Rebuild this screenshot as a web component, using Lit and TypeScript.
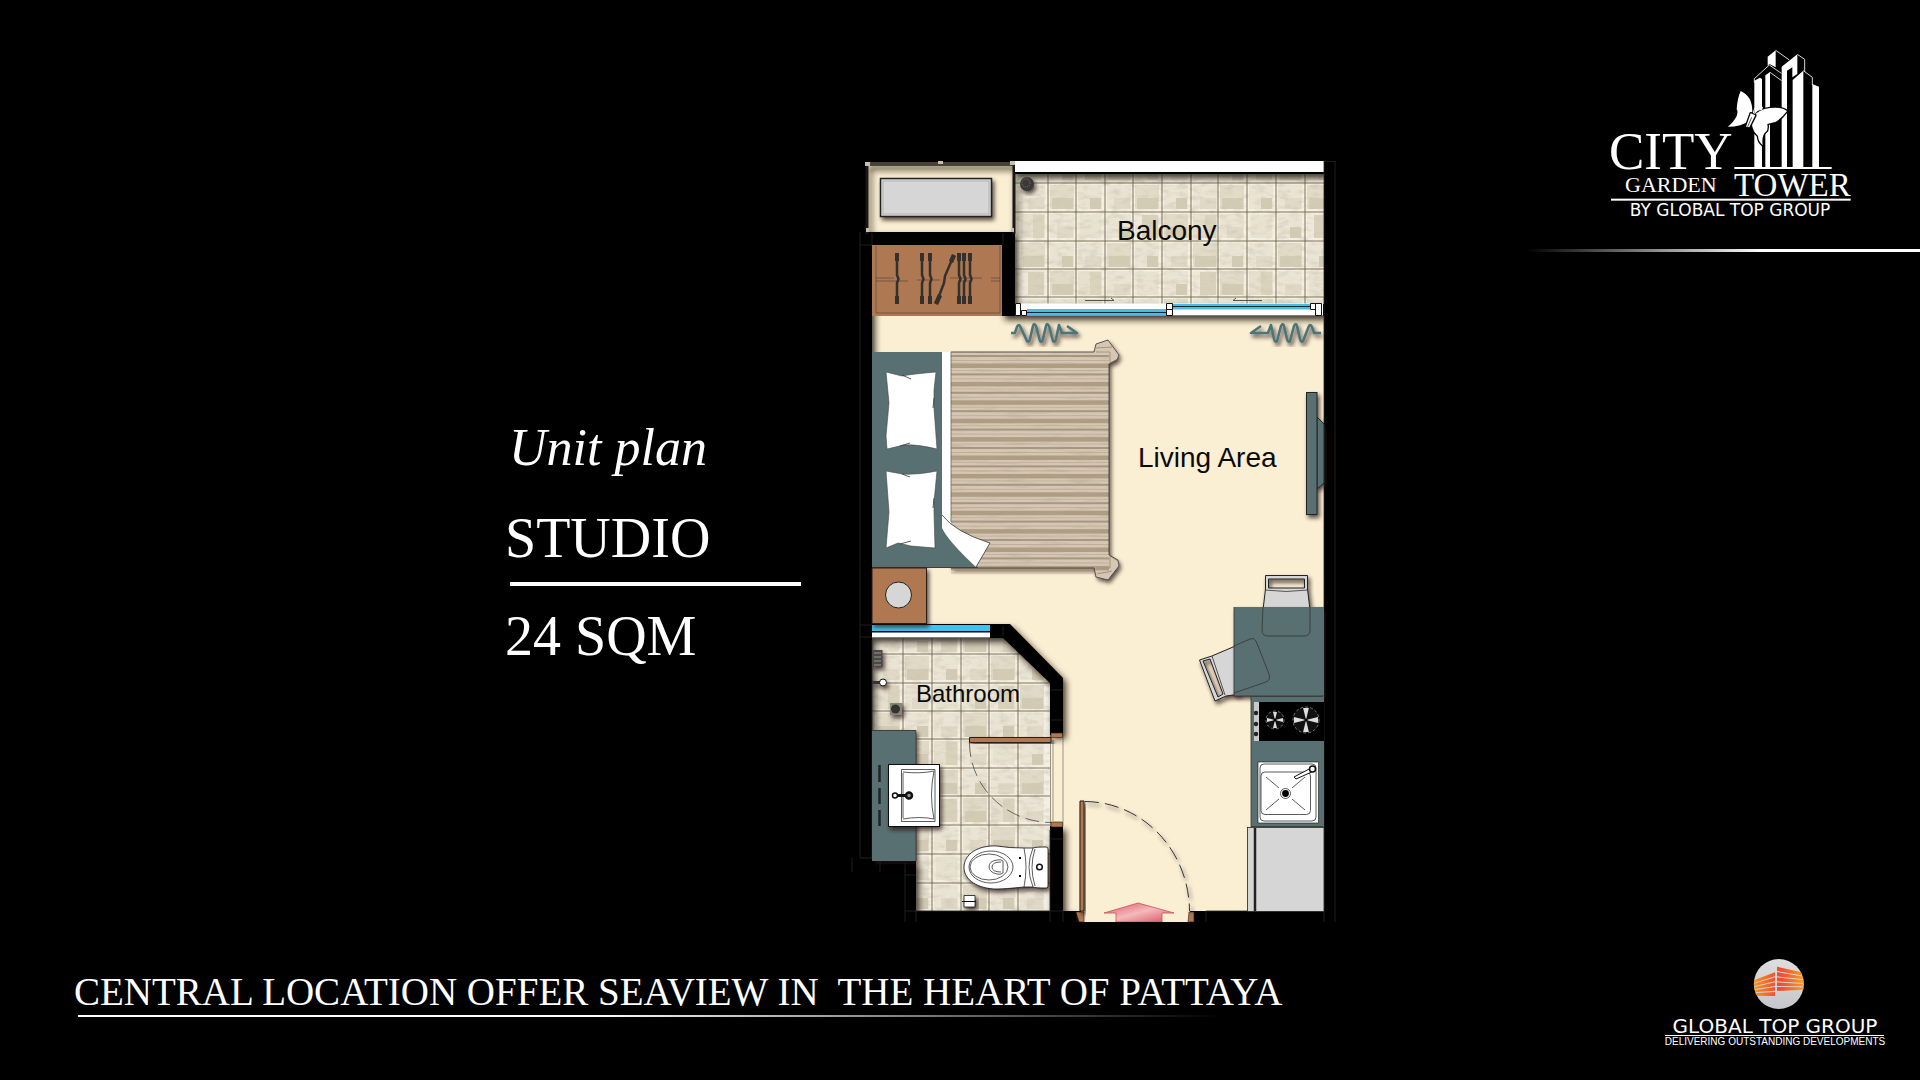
import { LitElement, html, svg, css } from "lit";
import { customElement } from "lit/decorators.js";

const range = (n: number) => Array.from({ length: n }, (_, i) => i);

/** Shared styles for the drawings. */
const drawing = css`
  :host {
    display: block;
  }
  svg {
    display: block;
    width: 100%;
    height: auto;
  }
  .serif {
    font-family: "Liberation Serif", "Times New Roman", serif;
  }
  .sans {
    font-family: "Liberation Sans", Arial, sans-serif;
  }
  .wide {
    font-family: "DejaVu Sans", Verdana, sans-serif;
  }
`;

@customElement("floor-plan")
export class FloorPlan extends LitElement {
  static styles = [
    drawing,
    css`
      .label {
        font-size: 28px;
        fill: #0a0a0a;
      }
      .label-small {
        font-size: 24px;
      }
      .cream {
        fill: #faeed3;
      }
      .teal {
        fill: #587071;
      }
      .wood {
        fill: #af7851;
        stroke: #2b1d12;
      }
      .grey {
        fill: #d6d6d6;
        stroke: #222;
      }
      .white {
        fill: #fff;
        stroke: #111;
      }
      .thin {
        fill: none;
        stroke: #333;
        stroke-width: 0.8;
      }
      .grout {
        fill: none;
        stroke: #6a5f45;
        stroke-width: 1;
        opacity: 0.85;
      }
      .seam {
        fill: none;
        stroke: #262626;
        stroke-width: 0.8;
      }
      .swing {
        fill: none;
        stroke: #333;
        stroke-dasharray: 14 6;
      }
      .glass {
        fill: #4bbde4;
      }
      .curtain {
        fill: none;
        stroke: #4c7479;
        stroke-width: 2.6;
        stroke-linejoin: round;
      }
    `,
  ];

  private tiles(xs: number[], ys: number[], x0: number, x1: number, y0: number, y1: number) {
    return svg`
      <path class="grout" d=${xs.map((x) => `M${x} ${y0}V${y1}`).join("") + ys.map((y) => `M${x0} ${y}H${x1}`).join("")}></path>`;
  }

  private patches(xs: number[], ys: number[]) {
    return ys.map((y, r) =>
      xs.map((x, c) => {
        const k = (r * 7 + c * 5 + r * c * 3) % 6;
        return svg`
          <rect x=${x + 2} y=${y + 2} width="24" height="24" fill="#bdb294" opacity=${0.1 + (k % 4) * 0.08}></rect>
          <rect x=${x + 4 + (k % 3) * 5} y=${y + 3 + (k % 2) * 12} width=${21 - (k % 3) * 5} height=${23 - (k % 2) * 12}
            fill="#b0a484" opacity=${0.1 + k * 0.06}></rect>`;
      })
    );
  }

  private blanket() {
    return range(12).map((i) => {
      const y = 365.5 + i * 18.4;
      return svg`
        <rect x="951" y=${y - 2} width="158" height="4.5" fill="#a8957a" opacity=".85"></rect>
        <rect x="951" y=${y - 5.5} width="158" height="1" fill="#c0af98"></rect>
        <rect x="951" y=${y - 10.5} width="158" height="2" fill="#9a8a70" opacity=".8"></rect>
        <rect x="951" y=${y + 4.5} width="158" height="1" fill="#c4b49e"></rect>`;
    });
  }

  private hanger(x: number) {
    return svg`
      <path d="M${x} 253V275L${x + 1.5} 279L${x} 283V304" fill="none" stroke="#33302e" stroke-width="2.5"></path>
      <path d="M${x} 253V261M${x} 296V304" stroke="#33302e" stroke-width="4"></path>`;
  }

  private burner(x: number, y: number, r: number) {
    return svg`
      <g transform="translate(${x} ${y})">
        <circle r=${r} fill="#111" stroke="#777" stroke-dasharray="3 2"></circle>
        ${[0, 90, 180, 270].map(
          (a) => svg`<path transform="rotate(${a})" d="M0 0L${-r / 4.5} ${-r + 1}H${r / 4.5}Z" fill="#ddd"></path>`
        )}
        <circle r="1.5" fill="#000"></circle>
      </g>`;
  }

  render() {
    const bx = [1048, 1076, 1105, 1133, 1162, 1191, 1218, 1247, 1276, 1305];
    const by = [183, 212, 241, 269, 297];
    const tx = [903, 932, 961, 989, 1018];
    const ty = [654, 683, 711, 739, 768, 796, 825, 854, 883];
    return html`
      <svg viewBox="850 160 490 762" role="img" aria-label="Studio floor plan">
        <defs>
          <filter id="shade" x="-20%" y="-20%" width="150%" height="150%">
            <feDropShadow dx="2" dy="3" stdDeviation="2" flood-color="#20180c" flood-opacity=".75"></feDropShadow>
          </filter>
          <filter id="wall-shade" filterUnits="userSpaceOnUse" x="850" y="150" width="500" height="790">
            <feDropShadow dx="3" dy="4" stdDeviation="3" flood-color="#20180c" flood-opacity=".85"></feDropShadow>
          </filter>
          <filter id="stone" x="0" y="0" width="100%" height="100%">
            <feTurbulence type="fractalNoise" baseFrequency=".09 .2" numOctaves="4" seed="4"></feTurbulence>
            <feColorMatrix values="0 0 0 0 .6  0 0 0 0 .56  0 0 0 0 .45  0 0 0 1.4 -.62"></feColorMatrix>
            <feComposite operator="in" in2="SourceGraphic"></feComposite>
          </filter>
          <filter id="weave" x="0" y="0" width="100%" height="100%">
            <feTurbulence type="fractalNoise" baseFrequency=".03 .4" numOctaves="3" seed="9"></feTurbulence>
            <feColorMatrix values="0 0 0 0 .45  0 0 0 0 .38  0 0 0 0 .28  0 0 0 1.2 -.6"></feColorMatrix>
            <feComposite operator="in" in2="SourceGraphic"></feComposite>
          </filter>
          <clipPath id="bath">
            <path d="M872 637H1003L1050 682V911H916V860H872Z"></path>
          </clipPath>
          <clipPath id="deck"><path d="M1015 173H1324V304H1015Z"></path></clipPath>
          <linearGradient id="arrow" x1="0" y1="0" x2="1" y2="1">
            <stop offset="0" stop-color="#dc5562"></stop>
            <stop offset=".5" stop-color="#f4b9bb"></stop>
            <stop offset="1" stop-color="#d8505e"></stop>
          </linearGradient>
        </defs>

        <!-- floors -->
        <path class="cream" d="M867 163H1014V234H867Z M872 316H1324V911H1190V922H1081V911H1050V680L1000 630L872 630Z"></path>
        <g clip-path="url(#deck)">
          <rect x="1015" y="173" width="309" height="131" fill="#f5f0e2"></rect>
          ${this.patches([1019, ...bx], [154, ...by])}
          <rect x="1015" y="173" width="309" height="131" fill="#f3ecd9" filter="url(#stone)"></rect>
          ${this.tiles(bx, by, 1015, 1324, 173, 304)}
        </g>
        <g clip-path="url(#bath)">
          <rect x="872" y="637" width="178" height="274" fill="#f4efe2"></rect>
          ${this.patches([874, ...tx], [626, ...ty])}
          <rect x="872" y="637" width="178" height="274" fill="#f0e9d6" filter="url(#stone)"></rect>
          ${this.tiles(tx, ty, 872, 1050, 637, 911)}
        </g>

        <!-- walls -->
        <g filter="url(#wall-shade)">
          <path d="M850 232H1015V316H1002V245H872V860H850Z"></path>
          <path d="M867 162H1015V166H867Z" fill="#4a4138"></path>
          <path d="M867 163V234M1014 163V234" stroke="#1b1917" stroke-width="3"></path>
          <rect x="1015" y="161" width="309" height="13"></rect>
          <path d="M990 624H1010L1063 678V735H1050V683L1003 638H990Z"></path>
          <path d="M1050 826H1063V911H1076V922H850V860H916V911H1050Z"></path>
          <rect x="1015" y="304" width="309" height="12"></rect>
          <rect x="872" y="624" width="118" height="14"></rect>
        </g>
        <path d="M1324 160H1340V922H1324ZM1194 911H1324V922H1194ZM850 861H915V922H850Z"></path>
        <path d="M865 162h5v4h-5zM938 161h5v3h-5zM1010 161h5v4h-5zM866 228h3v4h-3zM1011 228h3v4h-3z" fill="#c9bdac"></path>
        <rect x="1015" y="161" width="309" height="11" fill="#fff"></rect>
        <path class="seam" d="M860 232V858M872 640V858M872 233V245M860 245H872M1003 233V245M1324 161V922M1335 161V922M1324 161.500H1336M860 625H872M860 637H872M1003 626V636M1051 690H1063M1051 720H1063M1051 839H1063M852 858V872M860 858H880V872M905 863V922M916 911V922M905 875H916M905 911H1063M1050 830V922M1063 911V922M1206 911V922M1206 911H1324"></path>

        <!-- air conditioner ledge and balcony drain -->
        <rect class="grey" x="880.500" y="178.500" width="111" height="38" stroke-width="1.500" filter="url(#shade)"></rect>
        <rect class="thin" x="883" y="181" width="106" height="33" opacity=".25"></rect>
        <circle cx="1027" cy="184" r="7" fill="#3b3934" filter="url(#shade)"></circle>
        <circle cx="1026" cy="183" r="4" fill="none" stroke="#77736a" stroke-dasharray="1 1"></circle>

        <!-- wardrobe -->
        <rect x="872" y="245" width="130" height="71" fill="#ad7852"></rect>
        <path class="thin" stroke-opacity=".6" d="M876 246V313H1000V246M876 278H894M876 281H908M917 280H940M950 278H982M958 281H970M991 278H1000M991 281H1000"></path>
        ${[897, 922, 930, 959, 964, 970].map((x) => this.hanger(x))}
        <path d="M954 255L945 276L944 283L936 304" fill="none" stroke="#33302e" stroke-width="2.500"></path>
        <path d="M954 255L951 262M940 295L936 304" stroke="#33302e" stroke-width="4.500"></path>

        <!-- sliding windows -->
        <rect x="1015" y="303.500" width="308" height="12" fill="#fff"></rect>
        <rect class="glass" x="1027" y="309" width="139" height="6.500"></rect>
        <rect class="glass" x="1173" y="304" width="137" height="5.500"></rect>
        <path d="M1027 312.500H1166M1173 306.500H1310" stroke="#0b2a36" stroke-width="1.200"></path>
        <path class="white" d="M1015.500 303.500h5v12h-5zM1021.500 310.500h5v5h-5zM1166.500 303.500h6v6h-6zM1166.500 309.500h6v6h-6zM1310.500 303.500h5v6h-5zM1315.500 303.500h6v12h-6z"></path>
        <path class="thin" d="M1085 300.500H1114L1111 298M1262 300.500H1233L1236 298"></path>
        <rect x="872" y="625" width="118" height="6" fill="#3fc3f0"></rect>
        <rect x="872" y="632.500" width="118" height="5" fill="#fff"></rect>

        <!-- curtains -->
        <g filter="url(#shade)">
          <path class="curtain" d="M1011 333H1015Q1018 322 1020 326L1027 341Q1029 343 1030 339L1033 326Q1034 322 1036 326L1040 341Q1042 343 1043 339L1046 326Q1047 322 1049 326L1053 341Q1055 343 1056 339L1059 325L1062 333H1077L1067 326"></path>
          <path class="curtain" d="M1321 333H1314Q1311 322 1309 326L1303 341Q1301 343 1300 339L1297 326Q1296 322 1294 326L1290 341Q1288 343 1287 339L1284 326Q1283 322 1281 326L1277 341Q1275 343 1274 339L1271 325L1268 333H1251L1261 326"></path>
        </g>

        <!-- bed -->
        <g filter="url(#shade)">
          <path d="M951 352H1094L1096 344L1108 340L1119 355L1117 360L1109 364V555L1118 560L1119 566L1108 580L1096 577L1094 568H951Z" fill="#d6c7b5"></path>
        </g>
        ${this.blanket()}
        <rect x="951" y="352" width="158" height="216" filter="url(#weave)"></rect>
        <path d="M1096 352H1110V363L1118 359M1096 348L1112 347M1096 568H1110V556L1118 561M1097 574L1112 571" fill="none" stroke="#a8957a"></path>
        <path class="thin" d="M951 352H1094L1096 344L1108 340L1119 355L1117 360L1109 364V555L1118 560L1119 566L1108 580L1096 577L1094 568H951"></path>
        <rect class="teal" x="872" y="352" width="70" height="216"></rect>
        <path class="teal" d="M942 520L978 568H942Z"></path>
        <path class="thin" d="M872 567.500H978"></path>
        <rect x="942" y="352" width="9" height="173" fill="#fff"></rect>
        <path d="M951 352V522" stroke="#6b6252" stroke-width=".8"></path>
        <path d="M942 515Q955 532 990 543L976 567Q948 541 942 528Z" fill="#fff"></path>
        <path class="thin" d="M942 515Q955 532 990 543L976 567"></path>
        <path d="M886 372L902 376Q912 374 936 372L934 390V408L937 449Q916 444 904 445L887 449L886 436L889 403Z" fill="#fff" stroke="#444" stroke-width=".6"></path>
        <path d="M886 471L902 474Q916 475 937 471L934 502V512L935 548L911 546L898 543L886 548L889 512Z" fill="#fff" stroke="#444" stroke-width=".6"></path>
        <path class="thin" d="M902 375L911 379M900 446L910 443M902 474L910 477M900 544L911 541M934 398L933 408M934 498L933 508"></path>

        <!-- nightstand -->
        <rect class="wood" x="872" y="568" width="54.500" height="55.500" filter="url(#shade)"></rect>
        <circle class="grey" cx="898.500" cy="595" r="13"></circle>

        <!-- television -->
        <g filter="url(#shade)">
          <path class="teal" d="M1317 417L1324 424V483L1317 489Z" stroke="#222"></path>
          <rect class="teal" x="1306.500" y="392.500" width="10.500" height="122" stroke="#222"></rect>
        </g>

        <!-- dining table and chairs -->
        <g filter="url(#shade)">
          <path class="grey" fill-rule="evenodd" d="M1265.500 575.500H1307.500V589L1310 610H1263L1265.500 589ZM1268.500 579V588H1304.500V579Z"></path>
          <path class="grey" fill-rule="evenodd" d="M1199.500 660L1212 656L1240 644V694L1226 696L1215 701ZM1203 661L1218 697L1223 694L1210 659Z"></path>
        </g>
        <path d="M1234 607H1324V696H1250L1234 696Z" class="teal" filter="url(#shade)"></path>
        <path class="thin" d="M1265 590Q1286 593 1308 590M1263 607L1262 630Q1262 636 1268 636H1304Q1310 636 1310 630V607M1212 656L1225 695M1234 646L1250 639Q1254 637 1256 641L1269 674Q1271 680 1266 682L1234 693M1234 607V696H1324"></path>

        <!-- kitchen -->
        <rect class="teal" x="1251" y="696" width="73" height="131"></rect>
        <path class="thin" d="M1251 696V827M1251 696.500H1323M1251 826.500H1323"></path>
        <rect x="1259" y="702" width="65" height="39"></rect>
        <rect x="1254" y="702" width="5" height="39" fill="#c9c9c9"></rect>
        ${[713, 724, 734].map((y) => svg`<circle cx="1256" cy=${y} r="2.200" fill="#222"></circle>`)}
        ${this.burner(1275, 720, 9)} ${this.burner(1306, 720, 13)}
        <rect class="white" x="1258" y="762" width="60.500" height="61" stroke-width=".6"></rect>
        <rect class="thin" x="1260" y="764" width="56" height="57" rx="4"></rect>
        <rect class="thin" x="1261" y="772" width="49.500" height="42.500" rx="4"></rect>
        <path class="thin" d="M1266 777L1279 788M1305 777L1292 788M1266 810L1279 799M1305 810L1292 799"></path>
        <circle class="thin" cx="1285.500" cy="793.500" r="5"></circle>
        <circle cx="1285.500" cy="793.500" r="3.400"></circle>
        <path class="white" d="M1294 777L1311 768L1314 771L1296 779Z"></path>
        <circle class="white" cx="1312.500" cy="769" r="3" stroke-width="1.500"></circle>
        <rect class="grey" x="1247.500" y="827.500" width="76.500" height="84" stroke-width=".8"></rect>
        <path d="M1255 828V911" stroke="#222" stroke-width="2.500"></path>

        <!-- bathroom -->
        <g fill="#333" filter="url(#shade)">
          <rect x="872" y="650" width="10.500" height="17" fill="#4b4743"></rect>
          <rect x="890" y="703" width="12" height="12" fill="#8a8475"></rect>
          <circle cx="895.500" cy="709" r="4.500"></circle>
          <path d="M872 681H880V684H872Z"></path>
          <circle class="white" cx="883" cy="682.500" r="3.500"></circle>
        </g>
        <path d="M874 653H881M874 657H881M874 661H881M874 665H881" stroke="#999"></path>
        <rect class="teal" x="872" y="730" width="44" height="131" filter="url(#shade)"></rect>
        <path class="thin" d="M872 730.500H916V861"></path>
        <path d="M879.500 765V782M879.500 788V804M879.500 810V826" stroke="#1d2626" stroke-width="2.500"></path>
        <rect class="white" x="888.500" y="764.500" width="51" height="62" filter="url(#shade)"></rect>
        <path class="thin" stroke-width="1.200" d="M901.500 769.500V821.500H935V769.500ZM903 772Q920 774 934 771M903 773V818M934 771Q929 795 934 819Q920 816 903 819"></path>
        <path d="M895 795.500H908" stroke="#111" stroke-width="3"></path>
        <circle class="white" cx="895" cy="795.500" r="2.500" stroke-width="1.500"></circle>
        <circle cx="909" cy="795.500" r="3" fill="#999" stroke="#111" stroke-width="2.500"></circle>

        <path class="white" filter="url(#shade)" stroke-width=".8" d="M1033 848Q1035 847 1046 847Q1048 847 1048 849V886Q1048 888 1046 888Q1035 888 1033 887H1024Q1005 889 997 889C978 889 964 880 964 867.500C964 854 978 845 997 846Q1008 848 1024 848Z"></path>
        <ellipse class="thin" cx="991" cy="867" rx="22" ry="16"></ellipse>
        <ellipse class="thin" cx="989" cy="867" rx="19" ry="13"></ellipse>
        <path class="thin" d="M1003 861V873Q1000 875 997 874Q989 872 989 867Q989 861 997 860Q1001 859 1003 861ZM1001 862Q992 862 992 867Q992 872 1001 872M1024 848Q1028 867 1024 887M1033 848Q1025 867 1033 887M1035 849Q1029 867 1035 886"></path>
        <circle class="white" cx="1039.500" cy="867" r="2.800" stroke-width="1.500"></circle>
        <path d="M1019 857h2v2h-2zM1019 875h2v2h-2z"></path>
        <path class="white" stroke-width=".8" filter="url(#shade)" d="M964 895.500H975V907H964Z"></path>
        <path d="M962 901.500H976" stroke="#111"></path>

        <!-- doors -->
        <path d="M1050.500 735V826M1063 735V826M1053 740V821" class="thin" opacity=".6"></path>
        <path class="wood" stroke-width="1" filter="url(#shade)" d="M969.500 737.500H1051V742.500H969.500Z"></path>
        <path class="wood" stroke-width=".6" d="M1051 733H1062.500V737.500H1051ZM1051 822H1062.500V827H1051ZM1076 912H1084V922H1079ZM1189 912H1194V922H1188Z"></path>
        <path class="swing" opacity=".7" d="M969.500 743A82 80 0 0 0 1051 822.500"></path>
        <path class="wood" filter="url(#shade)" d="M1080 801H1084V911H1080Z"></path>
        <path class="swing" d="M1085 801.500A105 110 0 0 1 1189.500 911" filter="url(#shade)"></path>
        <path fill="url(#arrow)" stroke="#c8505a" stroke-width=".8" d="M1104 913L1138 903L1174 913H1162V922H1116V913Z"></path>

        <text class="sans label" x="1117" y="240">Balcony</text>
        <text class="sans label" x="1138" y="467">Living Area</text>
        <text class="sans label label-small" x="916" y="702">Bathroom</text>
      </svg>
    `;
  }
}

@customElement("tower-logo")
export class TowerLogo extends LitElement {
  static styles = [
    drawing,
    css`
      text {
        fill: #fff;
      }
      .city {
        font-size: 53px;
      }
      .garden {
        font-size: 22px;
      }
      .tower {
        font-size: 33px;
      }
      .by {
        font-size: 17px;
      }
    `,
  ];

  render() {
    return html`
      <svg viewBox="1608 46 246 174" role="img" aria-label="City Garden Tower by Global Top Group">
        <g transform="translate(1520 30) scale(.333333)" fill="#fff">
          <rect x="643" y="411" width="292" height="6"></rect>
          <path d="M703 152L720 143L726 147V411H703ZM736 136L750 126V411H736Z"></path>
          <path d="M743 80L767 61V112L748 102L743 107Z"></path>
          <path d="M785 110L832 73V132L817 142V112L801 122V411H785Z"></path>
          <path d="M818 150L850 122V411H818ZM877 162L897 170V411H877Z"></path>
          <path d="M703 158V146L748 105L784 130M750 127L785 152M767 61L808 90M832 73L854 88V126M850 122L877 142V165" fill="none" stroke="#fff" stroke-width="2.500"></path>
          <g stroke="#000" stroke-width="8" stroke-linejoin="round" paint-order="stroke">
            <path d="M697 262Q715 238 750 234Q785 230 801 243Q785 265 768 275L742 282Q745 300 738 305Q724 315 728 346Q715 335 714 318Q698 305 695 280Z"></path>
            <path d="M662 183Q697 198 697 245L688 272Q665 290 623 290Q640 278 650 258Q655 245 650 238Q652 205 662 183Z"></path>
            <path d="M692 250L706 256L688 292L678 290Z"></path>
          </g>
          <path d="M695 262L683 290" stroke="#000" stroke-width="2"></path>
          <path d="M700 250Q702 232 712 228M703 252Q712 236 727 238" fill="none" stroke="#fff" stroke-width="3"></path>
          <circle cx="708" cy="224" r="3"></circle>
          <circle cx="726" cy="233" r="3"></circle>
          <rect x="273" y="506" width="719" height="6"></rect>
        </g>
        <text class="serif city" x="1609" y="169">CITY</text>
        <text class="serif garden" x="1625" y="192">GARDEN</text>
        <text class="serif tower" x="1734" y="196">TOWER</text>
        <text class="wide by" x="1730" y="216" text-anchor="middle">BY GLOBAL TOP GROUP</text>
      </svg>
    `;
  }
}

@customElement("group-logo")
export class GroupLogo extends LitElement {
  static styles = [
    drawing,
    css`
      text {
        fill: #fff;
        text-anchor: middle;
      }
      .name {
        font-size: 20px;
      }
      .motto {
        font-size: 10px;
      }
    `,
  ];

  render() {
    const left = [
      [121, 129, 97, 109],
      [131, 139, 112, 124],
      [142, 148, 127, 138],
      [151, 157, 141, 152],
      [160, 167, 156, 168],
    ];
    const right = [
      [80, 93, 98, 107],
      [96, 109, 110, 118],
      [112, 124, 121, 129],
      [127, 138, 132, 139],
      [141, 153, 142, 149],
    ];
    return html`
      <svg viewBox="1664 956 222 92" role="img" aria-label="Global Top Group">
        <defs>
          <linearGradient id="ball" x1="0" y1="0" x2="0" y2="1">
            <stop offset="0" stop-color="#dedee0"></stop>
            <stop offset="1" stop-color="#c6c7cb"></stop>
          </linearGradient>
          <linearGradient id="flame" gradientUnits="userSpaceOnUse" x1="342" x2="492" y1="0" y2="0">
            <stop offset="0" stop-color="#f7941d"></stop>
            <stop offset=".45" stop-color="#f04e32"></stop>
            <stop offset=".55" stop-color="#f04e32"></stop>
            <stop offset="1" stop-color="#f7a01d"></stop>
          </linearGradient>
          <clipPath id="disc"><circle cx="416.500" cy="132" r="75"></circle></clipPath>
        </defs>
        <g transform="translate(1640 940) scale(.333333)">
          <circle cx="416.500" cy="132" r="75" fill="url(#ball)"></circle>
          <g clip-path="url(#disc)" fill="url(#flame)">
            ${left.map(([a, b, c, d]) => svg`<path d="M341 ${a}L405 ${c}V${d}L341 ${b}Z"></path>`)}
            ${right.map(([a, b, c, d]) => svg`<path d="M411 ${a}L492 ${c}V${d}L411 ${b}Z"></path>`)}
          </g>
        </g>
        <text class="wide name" x="1775" y="1033">GLOBAL TOP GROUP</text>
        <rect x="1665" y="1035" width="219" height="1" fill="#fff"></rect>
        <text class="sans motto" x="1775" y="1045">DELIVERING OUTSTANDING DEVELOPMENTS</text>
      </svg>
    `;
  }
}

@customElement("app-root")
export class AppRoot extends LitElement {
  static styles = css`
    :host {
      display: block;
      background: #000;
      color: #fff;
      font-family: "Liberation Serif", "Times New Roman", serif;
    }
    .slide {
      display: flex;
      flex-direction: column;
      min-height: 100vh;
      box-sizing: border-box;
      overflow: hidden;
    }
    .main {
      display: grid;
      grid-template-columns: 850fr 490fr 580fr;
    }
    .intro {
      align-self: center;
      justify-self: end;
      width: 296px;
      padding-top: 164px;
      margin-right: 49px;
    }
    h1,
    p {
      margin: 0;
      font-weight: 400;
    }
    .kicker {
      font-size: 52px;
      line-height: 60px;
      font-style: italic;
      padding-left: 4px;
      margin-bottom: 28px;
    }
    .type,
    .area {
      font-size: 56px;
      line-height: 64px;
    }
    .rule {
      height: 4px;
      margin: 12px 0 18px 5px;
      border: 0;
      background: #fff;
    }
    .plan {
      padding-top: 160px;
    }
    .brand {
      display: flex;
      flex-direction: column;
      align-items: flex-end;
      padding-top: 46px;
      gap: 29px;
    }
    .tower {
      width: 246px;
      margin-right: 66px;
    }
    .beam {
      width: 68%;
      height: 3px;
      background: linear-gradient(to right, #000, #fff 60%);
    }
    .footer {
      display: flex;
      justify-content: space-between;
      align-items: flex-start;
      margin-top: auto;
      padding: 0 34px 32px 74px;
    }
    .tagline {
      padding-top: 14px;
    }
    .tagline p {
      font-size: 39px;
      line-height: 44px;
      white-space: pre;
    }
    .underline {
      height: 2px;
      margin: 1px 60px 0 4px;
      background: linear-gradient(to right, #fff 45%, #000);
    }
    .group {
      width: 222px;
    }
  `;

  render() {
    return html`
      <div class="slide">
        <main class="main">
          <section class="intro">
            <p class="kicker">Unit plan</p>
            <h1 class="type">STUDIO</h1>
            <hr class="rule" />
            <p class="area">24 SQM</p>
          </section>
          <floor-plan class="plan"></floor-plan>
          <aside class="brand">
            <tower-logo class="tower"></tower-logo>
            <div class="beam"></div>
          </aside>
        </main>
        <footer class="footer">
          <div class="tagline">
            <p>CENTRAL LOCATION OFFER SEAVIEW IN  THE HEART OF PATTAYA</p>
            <div class="underline"></div>
          </div>
          <group-logo class="group"></group-logo>
        </footer>
      </div>
    `;
  }
}
